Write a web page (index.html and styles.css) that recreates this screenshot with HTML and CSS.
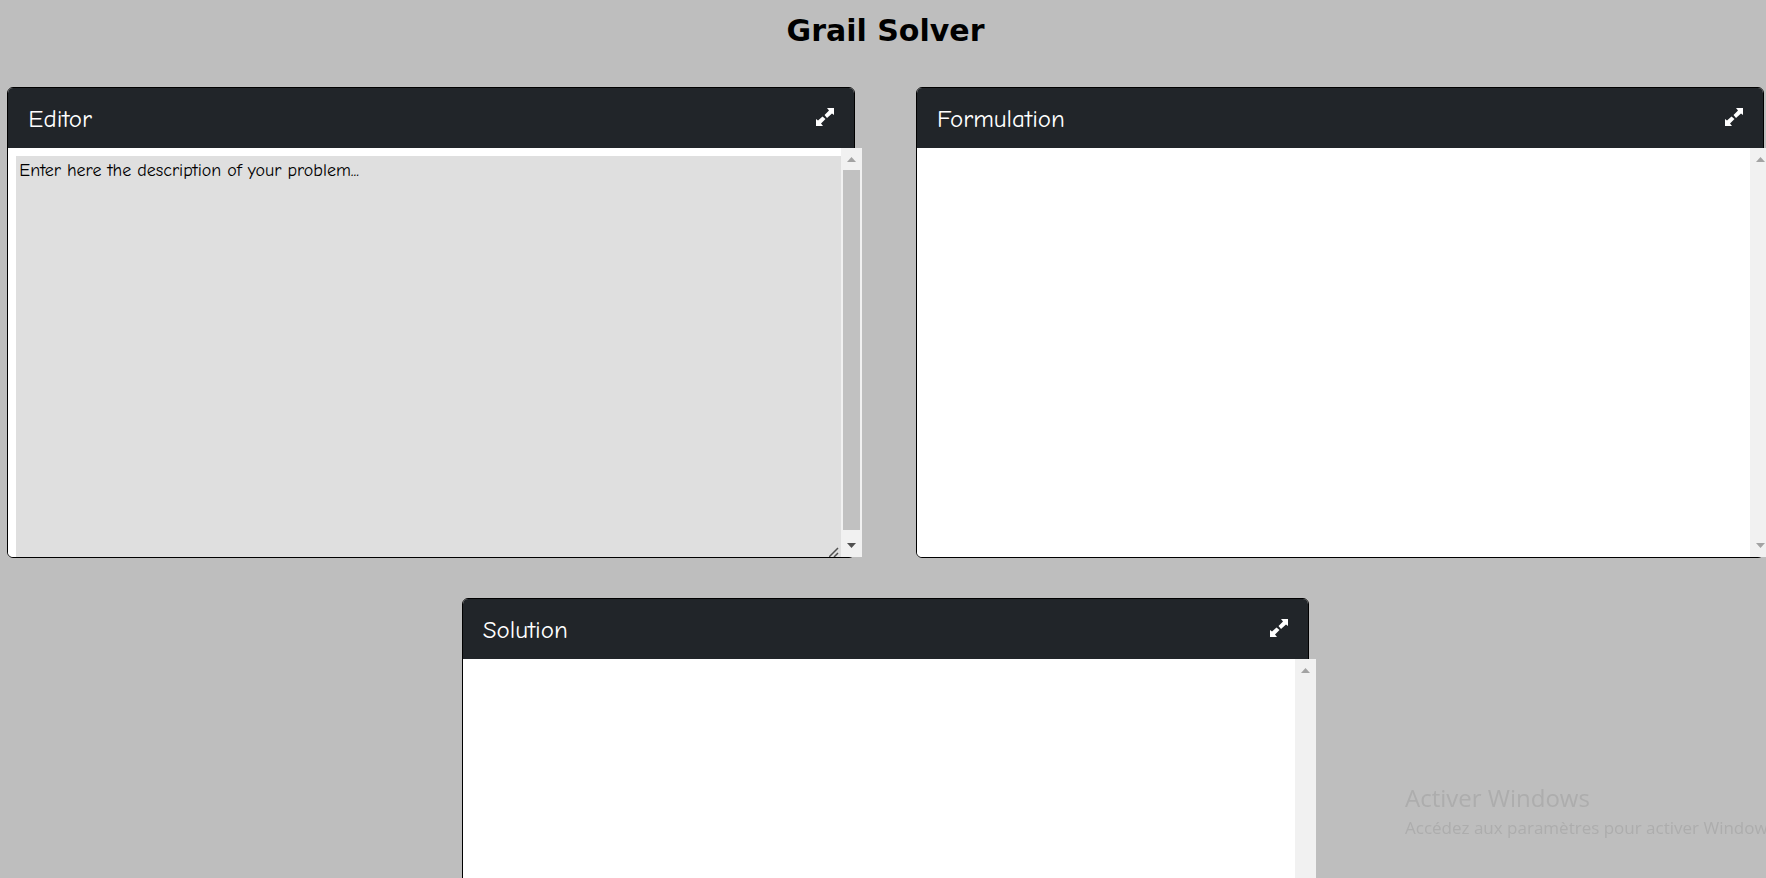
FILE: index.html
```html
<!DOCTYPE html>
<html lang="en">
<head>
<meta charset="utf-8">
<title>Grail Solver</title>
<link rel="stylesheet" href="styles.css">
</head>
<body>
<svg class="sprite" aria-hidden="true">
  <symbol id="expand" viewBox="0 0 20 20"><path d="M19 1V8L17 6.500L12 11L9.500 8L14 3.500L12 1ZM1 19V12L3 13.500L7.500 9.500L10.500 12L6 16.500L8 19Z"/><path class="gap" d="M8 8L12 12"/></symbol>
  <symbol id="up" viewBox="0 0 9 5"><path d="M0 5L4.500 0L9 5Z"/></symbol>
  <symbol id="down" viewBox="0 0 9 5"><path d="M0 0L4.500 5L9 0Z"/></symbol>
</svg>
<h1 class="title">Grail Solver</h1>
<main class="panels">
  <section class="card">
    <header class="card-header">
      <h2 class="card-title"><label for="problem">Editor</label></h2>
      <button class="expand" type="button" aria-label="Expand editor"><svg><use href="#expand"/></svg></button>
    </header>
    <div class="card-body">
      <div class="content editor">
        <textarea class="problem" id="problem">Enter here the description of your problem...</textarea>
        <svg class="grip" viewBox="0 0 10 10"><path d="M0 10L9 1M5 10L9 6"/></svg>
      </div>
      <div class="scrollbar">
        <svg class="arrow"><use href="#up"/></svg>
        <div class="thumb"></div>
        <svg class="arrow active"><use href="#down"/></svg>
      </div>
    </div>
  </section>
  <section class="card">
    <header class="card-header">
      <h2 class="card-title">Formulation</h2>
      <button class="expand" type="button" aria-label="Expand formulation"><svg><use href="#expand"/></svg></button>
    </header>
    <div class="card-body">
      <div class="content"></div>
      <div class="scrollbar">
        <svg class="arrow"><use href="#up"/></svg>
        <svg class="arrow"><use href="#down"/></svg>
      </div>
    </div>
  </section>
  <section class="card">
    <header class="card-header">
      <h2 class="card-title">Solution</h2>
      <button class="expand" type="button" aria-label="Expand solution"><svg><use href="#expand"/></svg></button>
    </header>
    <div class="card-body">
      <div class="content"></div>
      <div class="scrollbar">
        <svg class="arrow"><use href="#up"/></svg>
        <svg class="arrow"><use href="#down"/></svg>
      </div>
    </div>
  </section>
</main>
<aside class="watermark">
  <p class="watermark-title">Activer Windows</p>
  <p class="watermark-text">Accédez aux paramètres pour activer Windows.</p>
</aside>
</body>
</html>
```
FILE: styles.css
```css
* {
  box-sizing: border-box;
}

body {
  margin: 0;
  height: 100vh;
  overflow: hidden;
  background: #bebebe;
  color: #000;
  font-family: "Comic Sans MS", "Comic Neue", Lato, sans-serif;
  font-variant-ligatures: none;
}

.sprite {
  display: none;
}

.title {
  margin: 0;
  padding: 11px 0 36px 5px;
  font: bold 30px/40px "DejaVu Sans", Verdana, sans-serif;
  text-align: center;
}

.panels {
  display: flex;
  flex-wrap: wrap;
  justify-content: center;
  gap: 40px 61px;
  padding: 0 2px 0 7px;
}

.card {
  width: 48vw;
  border: 1px solid #000;
  border-radius: 6px;
  background: #fff;
}

.card-header {
  display: flex;
  align-items: center;
  justify-content: space-between;
  height: 60px;
  padding: 2px 19px 0 20px;
  border-radius: 5px 5px 0 0;
  background: #212529;
  color: #fff;
}

.card-title {
  margin: 0;
  font-size: 25px;
  font-weight: 400;
  line-height: 30px;
}

.expand {
  display: flex;
  padding: 0 0 4px;
  border: 0;
  background: none;
  color: #fff;
}

.expand svg {
  width: 20px;
  height: 20px;
  fill: currentColor;
}

.gap {
  stroke: #212529;
  stroke-width: 1;
}

.card-body {
  display: flex;
  height: 409px;
  margin-right: -8px;
}

.content {
  flex: 1;
  background: #fff;
  border-radius: 0 0 0 5px;
}

.editor {
  position: relative;
  padding: 8px 0 0 8px;
}

.problem {
  display: block;
  width: 100%;
  height: 100%;
  padding: 3px;
  border: 0;
  outline: 0;
  resize: none;
  background: #dfdfdf;
  color: #000;
  font-family: inherit;
  font-size: 18px;
  font-variant-ligatures: none;
  line-height: 23px;
}

.grip {
  position: absolute;
  right: 2px;
  bottom: 0;
  width: 10px;
  height: 10px;
  fill: none;
  stroke: #505050;
  stroke-width: 1.5;
}

.scrollbar {
  display: flex;
  flex-direction: column;
  align-items: center;
  justify-content: space-between;
  gap: 8px;
  width: 21px;
  padding: 9px 2px;
  background: #f1f1f1;
}

.arrow {
  flex: none;
  width: 9px;
  height: 5px;
  fill: #a3a3a3;
}

.arrow.active {
  margin-top: 5px;
  fill: #505050;
}

.thumb {
  flex: 1;
  width: 17px;
  background: #c1c1c1;
}

.watermark {
  position: fixed;
  left: calc(100vw - 361px);
  top: calc(100vh - 96px);
  color: #adadad;
  font-family: "Segoe UI", "Open Sans", sans-serif;
  white-space: nowrap;
}

.watermark p {
  margin: 0;
}

.watermark-title {
  font-size: 24px;
  line-height: 32px;
}

.watermark-text {
  font-size: 17px;
  line-height: 28px;
}
```
